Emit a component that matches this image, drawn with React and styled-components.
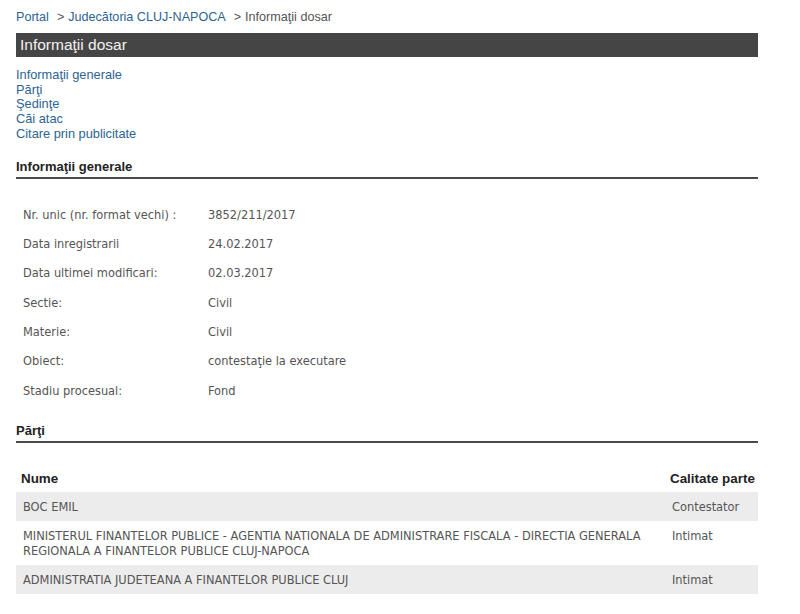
import React from "react";
import styled, { createGlobalStyle } from "styled-components";

const Global = createGlobalStyle`
  html, body { margin: 0; padding: 0; background: #fff; }
  body { font-family: "Liberation Sans", Arial, sans-serif; }
`;

const Page = styled.div`
  width: 742px;
  padding: 8px 0 0 16px;
`;

const Crumbs = styled.div`
  font-size: 12.6px;
  line-height: 18px;
  color: #555;
  height: 18px;
`;

const CrumbLink = styled.a`
  color: #2d6491;
  text-decoration: none;
`;

const Sep = styled.span`
  color: #555;
  margin: 0 4px 0 8px;
`;

const TitleBar = styled.div`
  margin-top: 7px;
  height: 24px;
  background: #454545;
  color: #f2f2f2;
  font-size: 15.5px;
  line-height: 24px;
  padding-left: 4px;
`;

const Nav = styled.nav`
  margin-top: 11px;
  display: flex;
  flex-direction: column;
  align-items: flex-start;
`;

const NavLink = styled.a`
  color: #2d6491;
  font-size: 12.8px;
  line-height: 14.7px;
  text-decoration: none;
`;

const SectionTitle = styled.h2`
  margin: ${(p) => p.$top}px 0 0;
  font-size: 13px;
  font-weight: bold;
  color: #222;
  line-height: 16px;
  padding-bottom: 2px;
  border-bottom: 2px solid #4a4a4a;
`;

const InfoTable = styled.div`
  margin-top: 21px;
  display: grid;
  grid-template-columns: 185px 1fr;
  font-family: Tahoma, "DejaVu Sans Condensed", "DejaVu Sans", sans-serif;
  font-size: 12.7px;
  color: #555;
  padding-left: 7px;
`;

const Cell = styled.div`
  height: 29.35px;
  line-height: 29.35px;
`;

const PartyTable = styled.div`
  margin-top: 23px;
  font-family: Tahoma, "DejaVu Sans Condensed", "DejaVu Sans", sans-serif;
  font-size: 12.7px;
  color: #555;
`;

const Row = styled.div`
  display: grid;
  grid-template-columns: 1fr 82px;
  column-gap: 24px;
  background: ${(p) => (p.$shade ? "#ececec" : "transparent")};
  padding: 7px 4px 7px 7px;
  line-height: 15px;
`;

const HeadRow = styled(Row)`
  font-family: "Liberation Sans", Arial, sans-serif;
  font-weight: bold;
  font-size: 13.4px;
  color: #222;
  padding: 5px 4px 6px 5px;
  & > div:last-child { margin-left: -2px; white-space: nowrap; }
`;

const info = [
  ["Nr. unic (nr. format vechi) :", "3852/211/2017"],
  ["Data inregistrarii", "24.02.2017"],
  ["Data ultimei modificari:", "02.03.2017"],
  ["Sectie:", "Civil"],
  ["Materie:", "Civil"],
  ["Obiect:", "contestaţie la executare"],
  ["Stadiu procesual:", "Fond"],
];

const parties = [
  ["BOC EMIL", "Contestator"],
  [
    "MINISTERUL FINANTELOR PUBLICE - AGENTIA NATIONALA DE ADMINISTRARE FISCALA - DIRECTIA GENERALA REGIONALA A FINANTELOR PUBLICE CLUJ-NAPOCA",
    "Intimat",
  ],
  ["ADMINISTRATIA JUDETEANA A FINANTELOR PUBLICE CLUJ", "Intimat"],
];

export default function App() {
  return (
    <>
      <Global />
      <Page>
        <Crumbs>
          <CrumbLink href="#">Portal</CrumbLink>
          <Sep>&gt;</Sep>
          <CrumbLink href="#">Judecătoria CLUJ-NAPOCA</CrumbLink>
          <Sep>&gt;</Sep>
          Informaţii dosar
        </Crumbs>
        <TitleBar>Informaţii dosar</TitleBar>
        <Nav>
          <NavLink href="#">Informaţii generale</NavLink>
          <NavLink href="#">Părţi</NavLink>
          <NavLink href="#">Şedinţe</NavLink>
          <NavLink href="#">Căi atac</NavLink>
          <NavLink href="#">Citare prin publicitate</NavLink>
        </Nav>
        <SectionTitle $top={17}>Informaţii generale</SectionTitle>
        <InfoTable>
          {info.map(([k, v]) => (
            <React.Fragment key={k}>
              <Cell>{k}</Cell>
              <Cell>{v}</Cell>
            </React.Fragment>
          ))}
        </InfoTable>
        <SectionTitle $top={18}>Părţi</SectionTitle>
        <PartyTable>
          <HeadRow>
            <div>Nume</div>
            <div>Calitate parte</div>
          </HeadRow>
          {parties.map(([n, c], i) => (
            <Row key={i} $shade={i % 2 === 0}>
              <div>{n}</div>
              <div>{c}</div>
            </Row>
          ))}
        </PartyTable>
      </Page>
    </>
  );
}
